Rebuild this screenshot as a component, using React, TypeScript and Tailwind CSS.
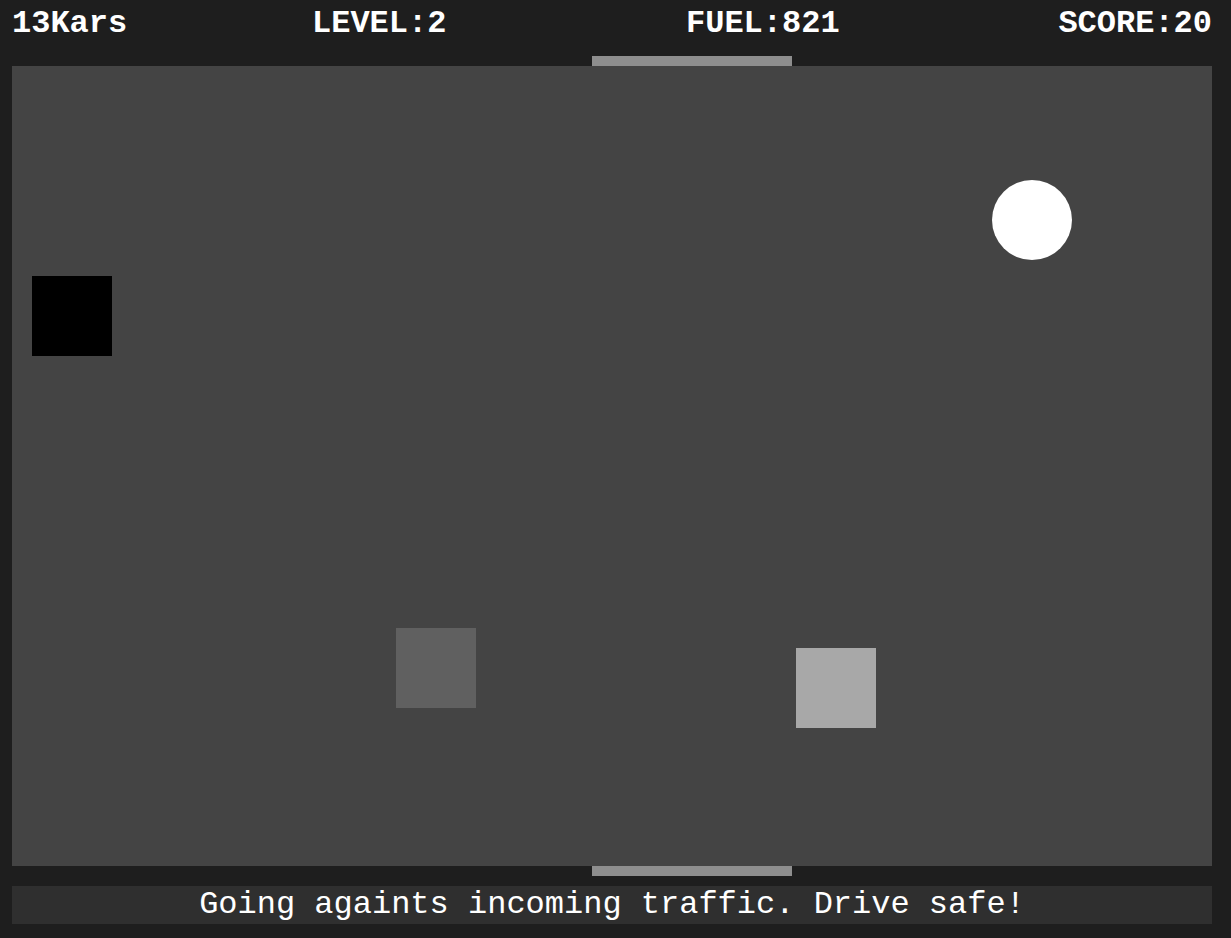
const mono = { fontFamily: '"Liberation Mono", "Courier New", monospace' };

function Car({ className }: { className: string }) {
  return <div className={`absolute w-[80px] h-[80px] ${className}`} />;
}

// road entry / exit marker
function Gate() {
  return (
    <div className="flex h-[10px] pl-[580px]">
      <div className="w-[200px] bg-[#8e8e8e]" />
    </div>
  );
}

export default function App() {
  return (
    <div className="w-[1231px] h-[938px] bg-[#1e1e1e] text-white" style={mono}>
      <div className="w-[1200px] ml-[12px] flex flex-col">
        {/* scoreboard */}
        <div className="h-[56px] pt-[8px] flex text-[32px] leading-[32px] font-bold">
          <div className="w-[300px]">13Kars</div>
          <div className="w-[374px]">LEVEL:2</div>
          <div className="flex-1">FUEL:821</div>
          <div className="text-right">SCORE:20</div>
        </div>

        {/* road */}
        <Gate />
        <div className="relative h-[800px] bg-[#444444]">
          <Car className="left-[20px] top-[210px] bg-black" />
          <Car className="left-[384px] top-[562px] bg-[#606060]" />
          <Car className="left-[784px] top-[582px] bg-[#a8a8a8]" />
          <Car className="left-[980px] top-[114px] bg-white rounded-full" />
        </div>
        <Gate />

        {/* message */}
        <div className="mt-[10px] h-[38px] bg-[#2f2f2f] text-center text-[32px] leading-[38px]">
          Going againts incoming traffic. Drive safe!
        </div>
      </div>
    </div>
  );
}
